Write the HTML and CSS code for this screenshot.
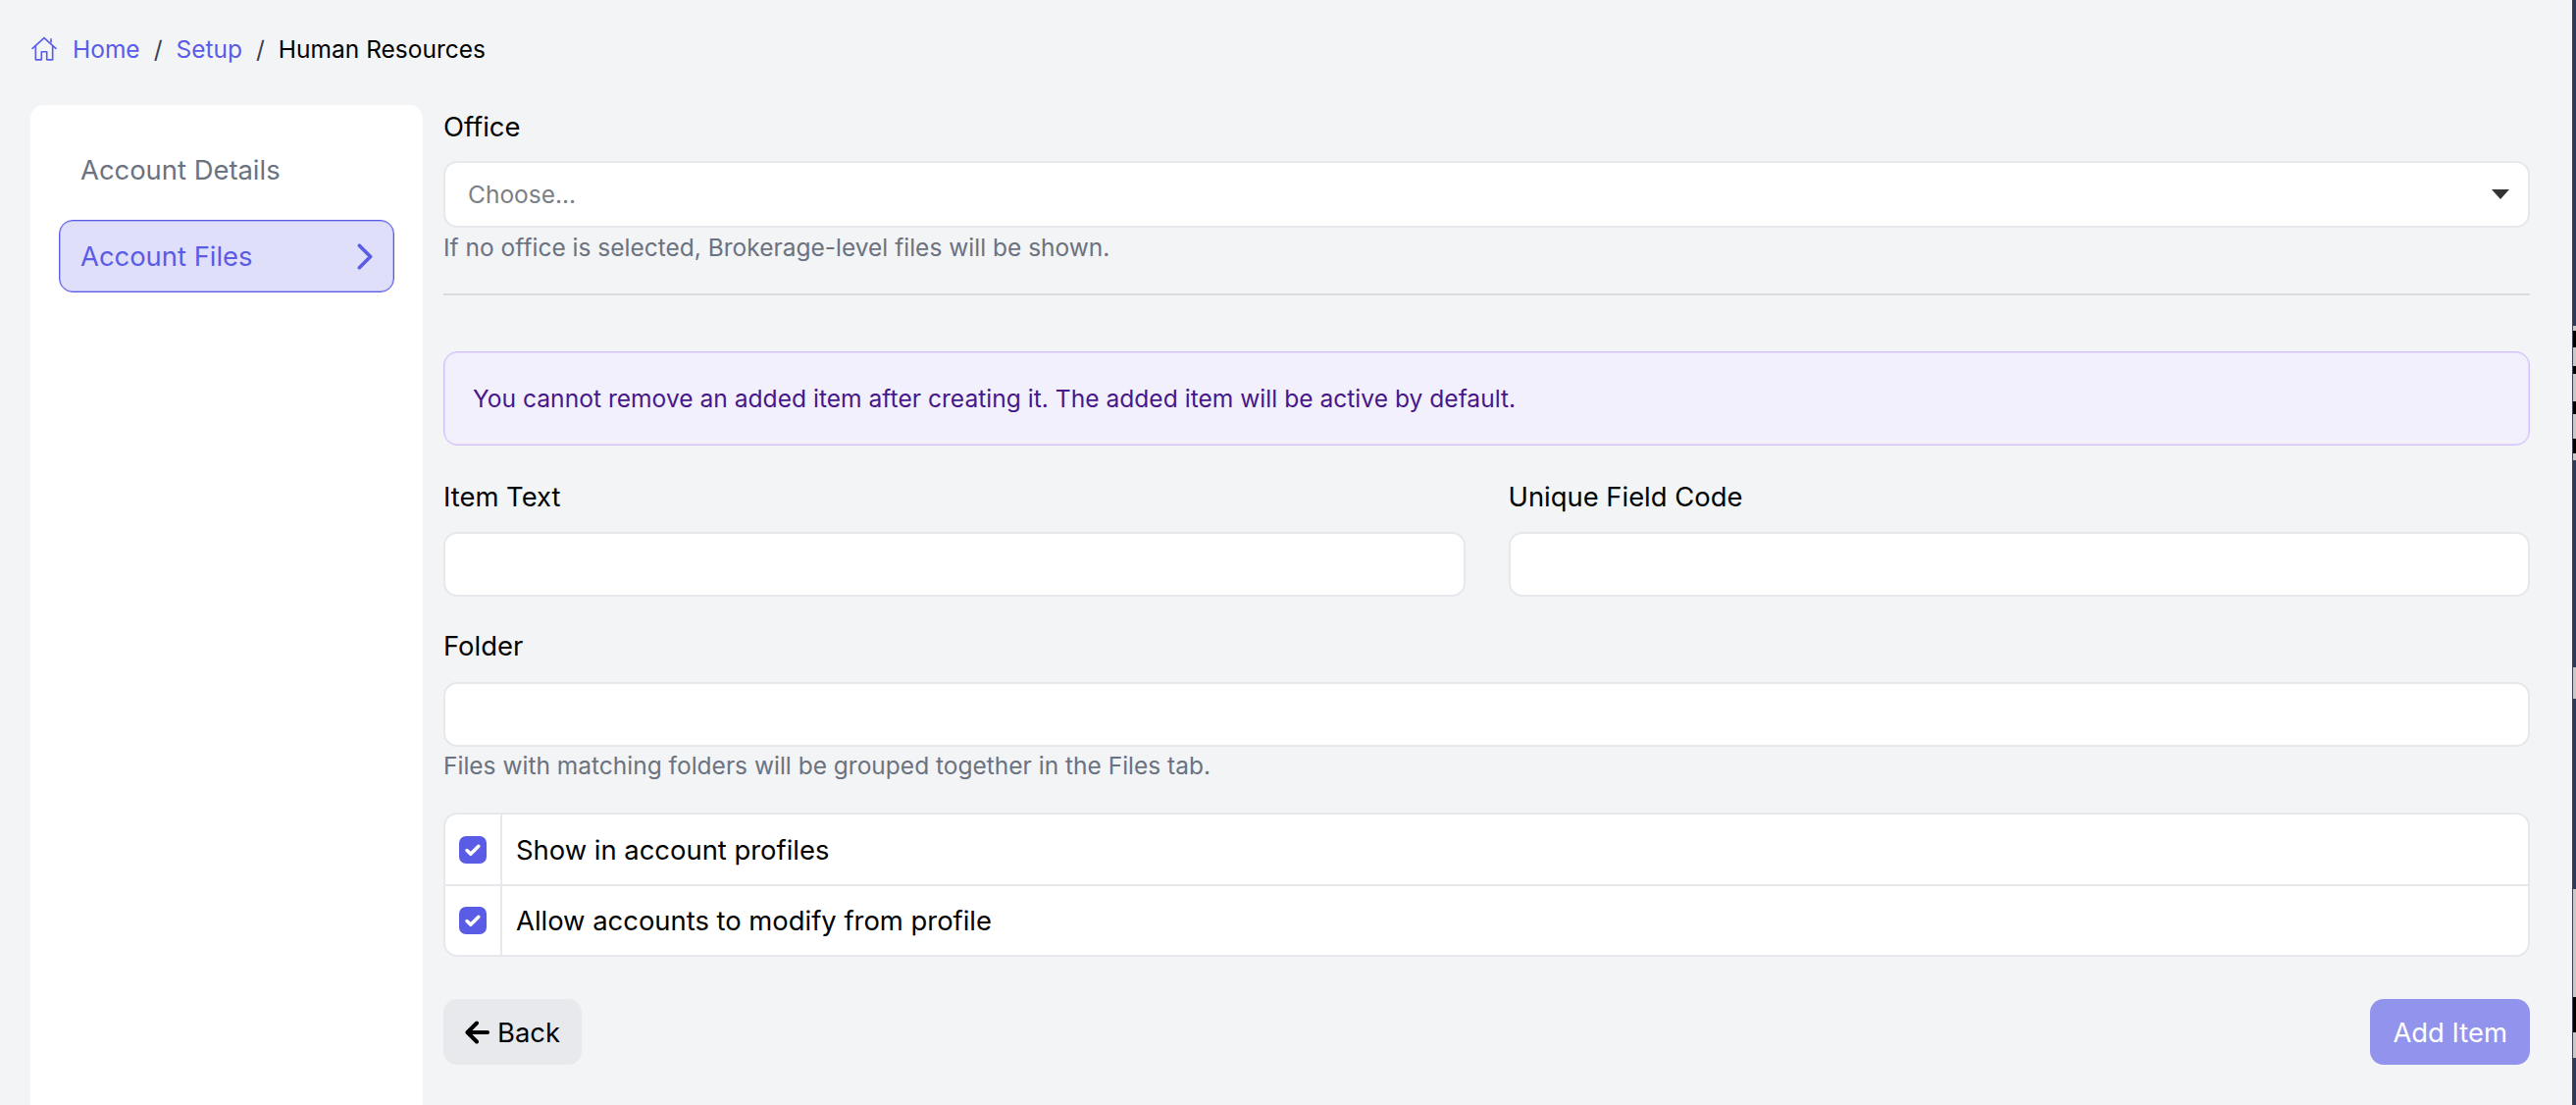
FILE: index.html
```html
<!DOCTYPE html>
<html lang="en">
<head>
<meta charset="utf-8">
<title>Human Resources</title>
<link rel="stylesheet" href="styles.css">
</head>
<body>
<div class="screen">
  <div class="page">
    <nav class="crumbs">
      <svg class="home" viewBox="0 0 24 24" fill="none" stroke="currentColor" stroke-width="1.5" stroke-linecap="round" stroke-linejoin="round"><path d="M1 11.5 12 1.5l11 10"/><path d="M4 9v13h5.5v-7.500h5V22H20V9"/><path d="M18.500 2.500v3"/></svg>
      <a class="crumb-link">Home</a><span class="sep">/</span><a class="crumb-link">Setup</a><span class="sep">/</span><span class="crumb-now">Human Resources</span>
    </nav>
    <div class="body">
      <aside class="side">
        <a class="side-item">Account Details</a>
        <a class="side-item active">Account Files
          <svg class="chev" viewBox="0 0 14 24" fill="none" stroke="currentColor" stroke-width="3.200" stroke-linecap="round" stroke-linejoin="round"><path d="M2 2l10 10L2 22"/></svg>
        </a>
      </aside>
      <main class="main">
        <label class="label">Office</label>
        <div class="select-wrap">
          <select class="control select"><option>Choose...</option></select>
        </div>
        <p class="help">If no office is selected, Brokerage-level files will be shown.</p>
        <hr class="rule">
        <div class="alert">You cannot remove an added item after creating it. The added item will be active by default.</div>
        <div class="two-col">
          <div class="field">
            <label class="label">Item Text</label>
            <input class="control input" type="text">
          </div>
          <div class="field">
            <label class="label">Unique Field Code</label>
            <input class="control input" type="text">
          </div>
        </div>
        <div class="field folder">
          <label class="label">Folder</label>
          <input class="control input input-folder" type="text">
          <p class="help help-tight">Files with matching folders will be grouped together in the Files tab.</p>
        </div>
        <div class="checks">
          <div class="check-row">
            <span class="check-cell"><span class="box"><svg viewBox="0 0 28 28" fill="none" stroke="#fff" stroke-width="3.500" stroke-linecap="round" stroke-linejoin="round"><path d="M8 14.500l3.800 3.800 8-8"/></svg></span></span>
            <span class="check-label">Show in account profiles</span>
          </div>
          <div class="check-row">
            <span class="check-cell"><span class="box"><svg viewBox="0 0 28 28" fill="none" stroke="#fff" stroke-width="3.500" stroke-linecap="round" stroke-linejoin="round"><path d="M8 14.500l3.800 3.800 8-8"/></svg></span></span>
            <span class="check-label">Allow accounts to modify from profile</span>
          </div>
        </div>
        <div class="actions">
          <button class="btn back"><svg class="arrow" viewBox="0 0 25 24" fill="none" stroke="currentColor" stroke-width="4" stroke-linecap="round" stroke-linejoin="round"><path d="M12 2.500 2.500 12l9.500 9.500"/><path d="M3 12h20"/></svg>Back</button>
          <button class="btn add">Add Item</button>
        </div>
      </main>
    </div>
  </div>
  <div class="strip">
    <i class="seg navy s1"></i>
    <i class="seg blk s2"></i>
    <i class="seg navy s3"></i>
    <i class="seg gray s4"></i>
    <i class="seg navy s5"></i>
    <i class="seg blk2 s6"></i>
    <i class="seg navy s7"></i>
  </div>
</div>
</body>
</html>
```
FILE: styles.css
```css
* { box-sizing: border-box; }
html, body { margin: 0; height: 100%; }
body {
  font-family: Inter, "Liberation Sans", sans-serif;
  color: #000;
  background: #f3f4f6;
  overflow: hidden;
}
.screen { display: flex; height: 1126px; }
.page { flex: 1; min-width: 0; display: flex; flex-direction: column; padding: 28px 43px 0 31px; }

.crumbs { display: flex; align-items: center; height: 44px; margin-bottom: 35px; font-size: 24.500px; }
.home { width: 26px; height: 26px; margin: 0 16px 0 1px; color: #5a5ce6; }
.crumb-link { color: #5a5ce6; }
.sep { color: #374151; margin: 0 14px; }
.crumb-now { color: #000; }

.body { flex: 1; display: flex; gap: 21px; min-height: 0; }
.side {
  width: 400px;
  flex: none;
  background: #fff;
  border-radius: 14px 14px 0 0;
  padding: 29px 29px 0;
  display: flex;
  flex-direction: column;
  gap: 14px;
}
.side-item {
  height: 74px;
  display: flex;
  align-items: center;
  justify-content: space-between;
  padding: 0 21px 0 21px;
  border: 1px solid transparent;
  border-radius: 14px;
  font-size: 27.400px;
  color: #6b7280;
}
.side-item.active {
  background: #dfdffa;
  border-color: #5a5ce6;
  color: #5a5ce6;
  box-shadow: inset 0 0 0 1px rgba(90, 92, 230, .35);
}
.chev { width: 16px; height: 27px; }

.main { flex: 1; min-width: 0; }
.label { display: block; height: 44px; line-height: 44px; margin-bottom: 13px; font-size: 27.400px; }
.control {
  display: block;
  width: 100%;
  background: #fff;
  border: 2px solid #e6e8ec;
  border-radius: 14px;
  font-family: inherit;
  outline: none;
}
.select-wrap { position: relative; }
.select-wrap::after {
  content: "";
  position: absolute;
  right: 21px;
  top: 29px;
  border-left: 9px solid transparent;
  border-right: 9px solid transparent;
  border-top: 10px solid #333;
}
.select {
  height: 68px;
  padding: 0 23px;
  font-size: 24.500px;
  color: #7b8087;
  appearance: none;
}
.input { height: 66px; }
.help { margin: 2px 0 0; line-height: 36px; font-size: 24.500px; color: #6b7280; }
.help-tight { margin-top: 1px; }
.rule { border: 0; border-top: 2px solid #d9dbdf; margin: 29px 0 57px; }
.alert {
  height: 96px;
  display: flex;
  align-items: center;
  padding: 0 29px;
  background: #f3f0fd;
  border: 1px solid #d3bffa;
  box-shadow: inset 0 0 0 1px rgba(211, 191, 250, .45);
  border-radius: 14px;
  font-size: 24.600px;
  color: #46188a;
}
.two-col { display: grid; grid-template-columns: 1fr 1fr; gap: 44px; margin-top: 30px; }
.label + .input { margin-top: 14px; }
.label + .input-folder { margin-top: 15px; }
.field .label { margin-bottom: 0; }
.folder { margin-top: 28px; }

.checks { margin-top: 30px; background: #fff; border: 2px solid #e6e8ec; border-radius: 14px; overflow: hidden; }
.check-row { display: flex; height: 71px; }
.check-row + .check-row { border-top: 2px solid #e6e8ec; height: 72px; }
.check-cell { width: 58px; flex: none; display: flex; align-items: center; justify-content: center; border-right: 2px solid #e6e8ec; }
.box { width: 28px; height: 28px; border-radius: 7px; background: #5a5ce6; display: flex; }
.box svg { width: 28px; height: 28px; }
.check-label { display: flex; align-items: center; padding-left: 14px; font-size: 27.400px; }

.actions { display: flex; justify-content: space-between; margin-top: 43px; }
.btn { height: 67px; border: 0; border-radius: 14px; font-family: inherit; font-size: 27.400px; display: flex; align-items: center; padding: 0 23px; }
.back { background: #e8e9ec; color: #000; padding: 0 22px; }
.arrow { width: 25px; height: 24px; margin-right: 8px; }
.add { background: #9293ed; color: #fff; }

.strip { width: 4px; flex: none; display: flex; flex-direction: column; border-left: 1px solid #3c4250; }
.seg { display: block; }
.navy { background: #2e3a5c; }
.s1 { height: 332px; }
.blk { background: linear-gradient(#c9c9c9 0 4%, #000 4% 16%, #c9c9c9 16% 30%, #000 30% 36%, #c9c9c9 36% 56%, #000 56% 66%, #c9c9c9 66% 84%, #000 84% 95%, #c9c9c9 95%); }
.s2 { height: 137px; }
.s3 { height: 211px; }
.gray { background: #c9c9c9; }
.s4 { height: 32px; }
.s5 { height: 194px; }
.blk2 { background: linear-gradient(#c9c9c9 0 64%, #000 64% 85%, #c9c9c9 85%); }
.s6 { height: 172px; }
.s7 { height: 48px; }
```
